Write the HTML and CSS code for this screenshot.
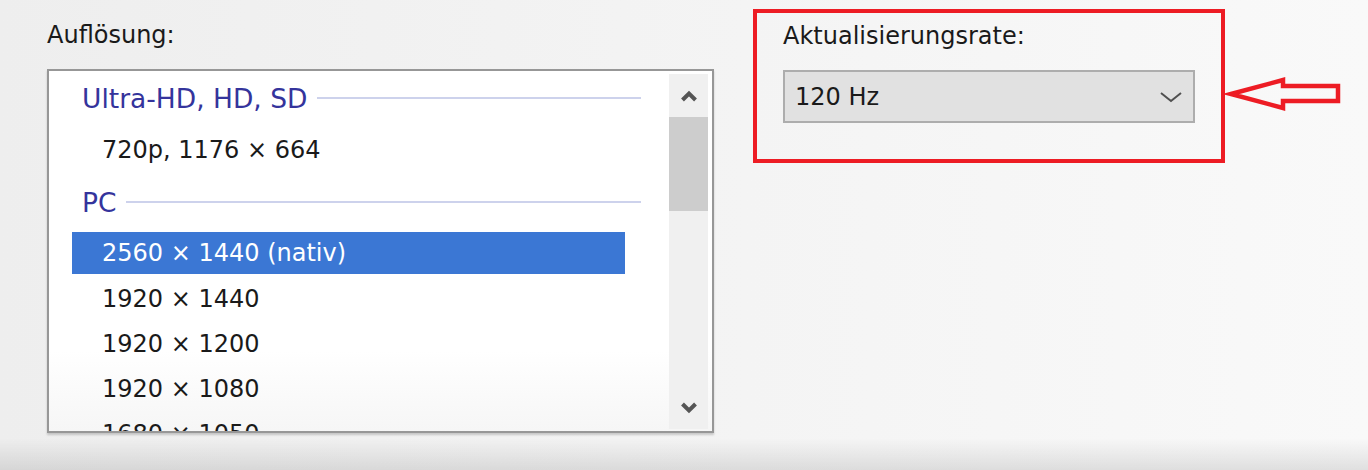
FILE: index.html
```html
<!DOCTYPE html>
<html lang="de">
<head>
    <meta charset="UTF-8">
    <meta name="viewport" content="width=device-width, initial-scale=1.0">
    <title>Anzeige</title>
    <link rel="stylesheet" href="styles.css">
</head>
<body>
    <div class="dialog">
        <div class="resolution">
            <div class="label">Auflösung:</div>
            <div class="listbox">
                <div class="list-items">
                    <div class="group"><span>Ultra-HD, HD, SD</span><i class="rule"></i></div>
                    <div class="item tall">720p, 1176 × 664</div>
                    <div class="group"><span>PC</span><i class="rule"></i></div>
                    <div class="item selected">2560 × 1440 (nativ)</div>
                    <div class="item">1920 × 1440</div>
                    <div class="item">1920 × 1200</div>
                    <div class="item">1920 × 1080</div>
                    <div class="item">1680 × 1050</div>
                </div>
                <div class="scrollbar">
                    <div class="scroll-btn">
                        <svg width="18" height="12" viewBox="0 0 18 12"><path d="M2.5 10 L9 3.5 L15.5 10" fill="none" stroke="#555555" stroke-width="4"/></svg>
                    </div>
                    <div class="thumb"></div>
                    <div class="track"></div>
                    <div class="scroll-btn">
                        <svg width="18" height="12" viewBox="0 0 18 12"><path d="M2.5 2 L9 8.5 L15.5 2" fill="none" stroke="#555555" stroke-width="4"/></svg>
                    </div>
                </div>
            </div>
        </div>

        <div class="refresh">
            <div class="highlight">
                <div class="label">Aktualisierungsrate:</div>
                <div class="combo">
                    <span>120 Hz</span>
                    <svg width="24" height="14" viewBox="0 0 24 14"><path d="M2 3 L12 11 L22 3" fill="none" stroke="#505050" stroke-width="2"/></svg>
                </div>
            </div>
            <svg class="pointer" width="120" height="36" viewBox="0 0 120 36">
                <path d="M6 17 L58 3 L58 9 L113 9 L113 24 L58 24 L58 31 Z" fill="none" stroke="#ed1c24" stroke-width="4.5" stroke-linejoin="miter"/>
            </svg>
        </div>
    </div>
</body>
</html>
```

FILE: styles.css
```css
body {
    margin: 0;
    height: 470px;
    overflow: hidden;
    font-family: "DejaVu Sans", sans-serif;
    font-size: 24px;
    color: #1a1a1a;
    background:
        linear-gradient(to bottom, rgba(0,0,0,0) 438px, rgba(0,0,0,0.1) 470px),
        linear-gradient(to right, #eeeeee, #f9f9f9);
}

.dialog { display: flex; align-items: flex-start; padding: 9px 0 0 47px; }

.label { line-height: 30px; }

/* Auflösung */
.resolution { width: 667px; padding-top: 11px; }
.resolution .label { margin-bottom: 19px; }

.listbox {
    display: flex;
    height: 360px;
    border: 2px solid #979797;
    background: linear-gradient(to bottom, #ffffff 280px, #f6f6f6);
    box-shadow: 0 2px 2px rgba(0,0,0,0.18);
}
.list-items { flex: 1; overflow: hidden; padding-top: 1px; }

.group {
    display: flex;
    align-items: center;
    height: 52px;
    padding-left: 33px;
    margin-right: 28px;
    font-size: 26.5px;
    color: #34349c;
}
.group .rule { flex: 1; height: 2px; margin-left: 10px; background: #cdd2ec; }

.item { height: 45px; line-height: 45px; margin-left: 23px; width: 553px; padding-left: 30px; box-sizing: border-box; }
.item.tall { height: 52px; line-height: 52px; }
.item.selected { height: 42px; line-height: 42px; margin: 4px 0 3px 23px; background: #3b77d4; color: #ffffff; }

.scrollbar { display: flex; flex-direction: column; width: 39px; margin: 3px 4px 2px 0; background: #f0f0f0; }
.scroll-btn { height: 43px; display: flex; align-items: center; justify-content: center; }
.thumb { height: 94px; background: #cdcdcd; }
.track { flex: 1; }

/* Aktualisierungsrate */
.refresh { display: flex; align-items: flex-start; margin-left: 39px; }
.highlight {
    width: 472px;
    height: 154px;
    box-sizing: border-box;
    border: 4px solid #ed1c24;
    padding: 8px 26px 0;
}
.highlight .label { margin-bottom: 19px; }
.combo {
    display: flex;
    align-items: center;
    justify-content: space-between;
    width: 412px;
    height: 53px;
    box-sizing: border-box;
    border: 2px solid #adadad;
    background: #e1e1e1;
    padding: 0 10px 0 10px;
}
.pointer { margin: 68px 0 0 0; }
```
